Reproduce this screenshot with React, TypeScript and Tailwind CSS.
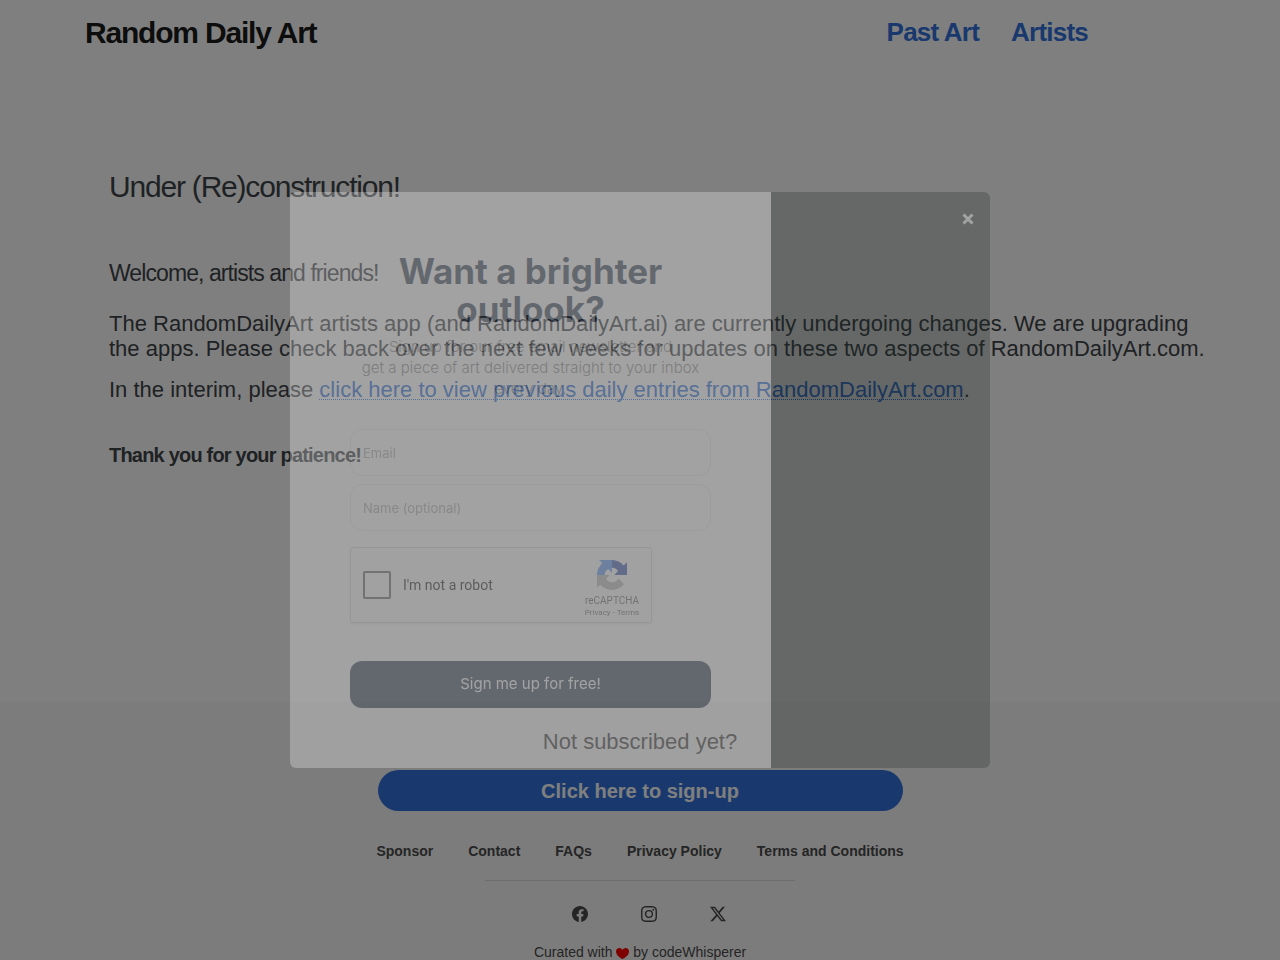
import { useState } from "react";
import { BsFacebook, BsInstagram, BsTwitterX } from "react-icons/bs";

// ---------- Data ----------
const footerLinks = ["Sponsor", "Contact", "FAQs", "Privacy Policy", "Terms and Conditions"];

const socials = [
  { name: "Facebook", Icon: BsFacebook },
  { name: "Instagram", Icon: BsInstagram },
  { name: "X", Icon: BsTwitterX },
];

// ---------- Drawings ----------
function CaptchaLogo() {
  return (
    <svg viewBox="0 0 64 64" className="h-[30px] w-[30px]" aria-hidden="true">
      <path
        d="M64 31.955l-.033-1.37V4.687l-7.16 7.16C50.948 4.674 42.033.093 32.05.093c-10.4 0-19.622 4.96-25.458 12.64l11.736 11.86a15.55 15.55 0 0 1 4.754-5.334c2.05-1.6 4.952-2.906 8.968-2.906.485 0 .86.057 1.135.163 4.976.393 9.288 3.14 11.828 7.124l-8.307 8.307L64 31.953"
        fill="#1c3aa9"
      />
      <path
        d="M31.862.094l-1.37.033H4.594l7.16 7.16C4.58 13.147 0 22.06 0 32.046c0 10.4 4.96 19.622 12.64 25.458L24.5 45.768a15.55 15.55 0 0 1-5.334-4.754c-1.6-2.05-2.906-4.952-2.906-8.968 0-.485.057-.86.163-1.135.393-4.976 3.14-9.288 7.124-11.828l8.307 8.307L31.86.095"
        fill="#4285f4"
      />
      <path
        d="M.001 32.045l.033 1.37v25.898l7.16-7.16c5.86 7.173 14.774 11.754 24.76 11.754 10.4 0 19.622-4.96 25.458-12.64l-11.736-11.86a15.55 15.55 0 0 1-4.754 5.334c-2.05 1.6-4.952 2.906-8.968 2.906-.485 0-.86-.057-1.135-.163-4.976-.393-9.288-3.14-11.828-7.124l8.307-8.307L0 32.045"
        fill="#ababab"
      />
    </svg>
  );
}

function Heart() {
  return (
    <svg viewBox="0 0 26 22" className="inline-block h-[11px] w-[13px] align-[-2px]" aria-label="love" role="img">
      <path
        d="M13 22C8 20 0 14 0 7 0 2.500 3 0 6.500 0 9.500 0 12 1.500 13 4 14 1.500 16.500 0 19.500 0 23 0 26 2.500 26 7 26 14 18 20 13 22z"
        fill="#ff0000"
      />
    </svg>
  );
}

// ---------- Sign-up dialog ----------
function SignupModal({ onClose }: { onClose: () => void }) {
  return (
    <div className="fixed inset-0 flex items-center justify-center bg-black/50">
      <div
        role="dialog"
        aria-labelledby="signup-title"
        className="relative flex w-[700px] max-w-full overflow-hidden rounded-md opacity-28"
      >
        <form
          className="flex w-[481px] flex-col bg-white p-[60px] font-['Inter',sans-serif]"
          onSubmit={(e) => e.preventDefault()}
        >
          <h2 id="signup-title" className="text-center text-[35px] leading-[38px] font-bold text-[#1f2d47]">
            Want a brighter
            <br />
            outlook?
          </h2>
          <p className="mt-2 text-center text-[15px] leading-[21px] font-light whitespace-nowrap text-[#777777]">
            Sign up for our free email newsletter and
            <br />
            get a piece of art delivered straight to your inbox
            <br />
            every day.
          </p>
          <input
            type="email"
            aria-label="Email"
            placeholder="Email"
            className="mt-[30px] h-[47px] rounded-xl border border-[#e8e8e8] px-3 text-[13px] placeholder:text-[#a0a0a0]"
          />
          <input
            type="text"
            aria-label="Name (optional)"
            placeholder="Name (optional)"
            className="mt-2 h-[47px] rounded-xl border border-[#e8e8e8] px-3 text-[13px] placeholder:text-[#a0a0a0]"
          />
          <div className="mt-4 flex h-[76px] w-[302px] items-center rounded-[3px] border border-[#d3d3d3] bg-[#f9f9f9] pr-2 pl-3 font-['Roboto',sans-serif] shadow-sm">
            <input
              id="robot"
              type="checkbox"
              className="h-7 w-7 appearance-none rounded-[2px] border-2 border-[#555555] bg-[#fcfcfc] checked:bg-[#4285f4]"
            />
            <label htmlFor="robot" className="ml-3 flex-1 text-sm text-black">
              I'm not a robot
            </label>
            <div className="flex w-[62px] flex-col items-center pt-2 text-[#555555]">
              <CaptchaLogo />
              <span className="mt-[5px] text-[10px] leading-[12px]">reCAPTCHA</span>
              <span className="text-[8px] leading-[12px]">
                <a href="#privacy">Privacy</a> - <a href="#terms">Terms</a>
              </span>
            </div>
          </div>
          <button type="submit" className="mt-[38px] h-[47px] rounded-xl bg-[#1f2d47] text-[15px] text-white">
            Sign me up for free!
          </button>
        </form>
        <div className="flex-1 bg-[#27302c]" />
        <button type="button" aria-label="Close" onClick={onClose} className="absolute top-5 right-[15px] p-px text-white">
          <svg viewBox="0 0 12 12" className="h-3 w-3" stroke="currentColor" strokeWidth="3">
            <path d="M1.500 1.500l9 9M10.500 1.500l-9 9" />
          </svg>
        </button>
      </div>
    </div>
  );
}

// ---------- Page ----------
export default function App() {
  const [open, setOpen] = useState(true);

  return (
    <div className="flex min-h-screen flex-col bg-white font-['Liberation_Sans',Arial,sans-serif] text-[#3e4448]">
      <header className="flex items-start justify-between pt-3 pr-[192px] pl-[85px] font-bold">
        <a href="#home" className="text-3xl leading-[42px] tracking-[-0.04em] text-[#1a1a1a]">
          Random Daily Art
        </a>
        <nav className="flex gap-8 text-[26px] leading-10 tracking-[-0.03em] text-[#3273dc]">
          <a href="#past-art">Past Art</a>
          <a href="#artists">Artists</a>
        </nav>
      </header>

      <main className="flex-1 pt-[115px] pr-[60px] pl-[109px]">
        <h1 className="text-3xl tracking-[-0.04em]">Under (Re)construction!</h1>
        <h2 className="mt-[53px] text-[23px] leading-[30px] tracking-[-0.04em]">Welcome, artists and friends!</h2>
        <p className="mt-[23px] text-[22px] leading-[25px]">
          The RandomDailyArt artists app (and RandomDailyArt.ai) are currently undergoing changes. We are upgrading the
          apps. Please check back over the next few weeks for updates on these two aspects of RandomDailyArt.com.
        </p>
        <p className="mt-4 text-[22px] leading-[25px]">
          In the interim, please{" "}
          <a
            href="#entries"
            className="inline-block border-b border-dotted border-[#3273dc] leading-[18px] text-[#3273dc]"
          >
            click here to view previous daily entries from RandomDailyArt.com
          </a>
          .
        </p>
        <h3 className="mt-[39px] text-xl font-bold tracking-[-0.04em]">Thank you for your patience!</h3>
      </main>

      <footer className="flex flex-col items-center bg-[#f9f9f9] pt-6 text-[#4a4a4a]">
        <p className="text-[22px] leading-8">Not subscribed yet?</p>
        <button
          type="button"
          onClick={() => setOpen(true)}
          className="mt-3 h-[41px] w-[525px] max-w-full rounded-full bg-[#3273dc] text-xl font-bold text-white"
        >
          Click here to sign-up
        </button>
        <nav className="mt-[30px] flex gap-[35px] text-sm font-bold">
          {footerLinks.map((label) => (
            <a key={label} href="#">
              {label}
            </a>
          ))}
        </nav>
        <hr className="mt-[19px] w-[310px] border-[#dbdbdb]" />
        <div className="mt-[25px] flex gap-[53px] pl-[18px]">
          {socials.map(({ name, Icon }) => (
            <a key={name} href="#" aria-label={name}>
              <Icon className="h-4 w-4" />
            </a>
          ))}
        </div>
        <p className="mt-[22px] text-sm leading-4">
          Curated with <Heart /> by codeWhisperer
        </p>
      </footer>

      {open && <SignupModal onClose={() => setOpen(false)} />}
    </div>
  );
}
